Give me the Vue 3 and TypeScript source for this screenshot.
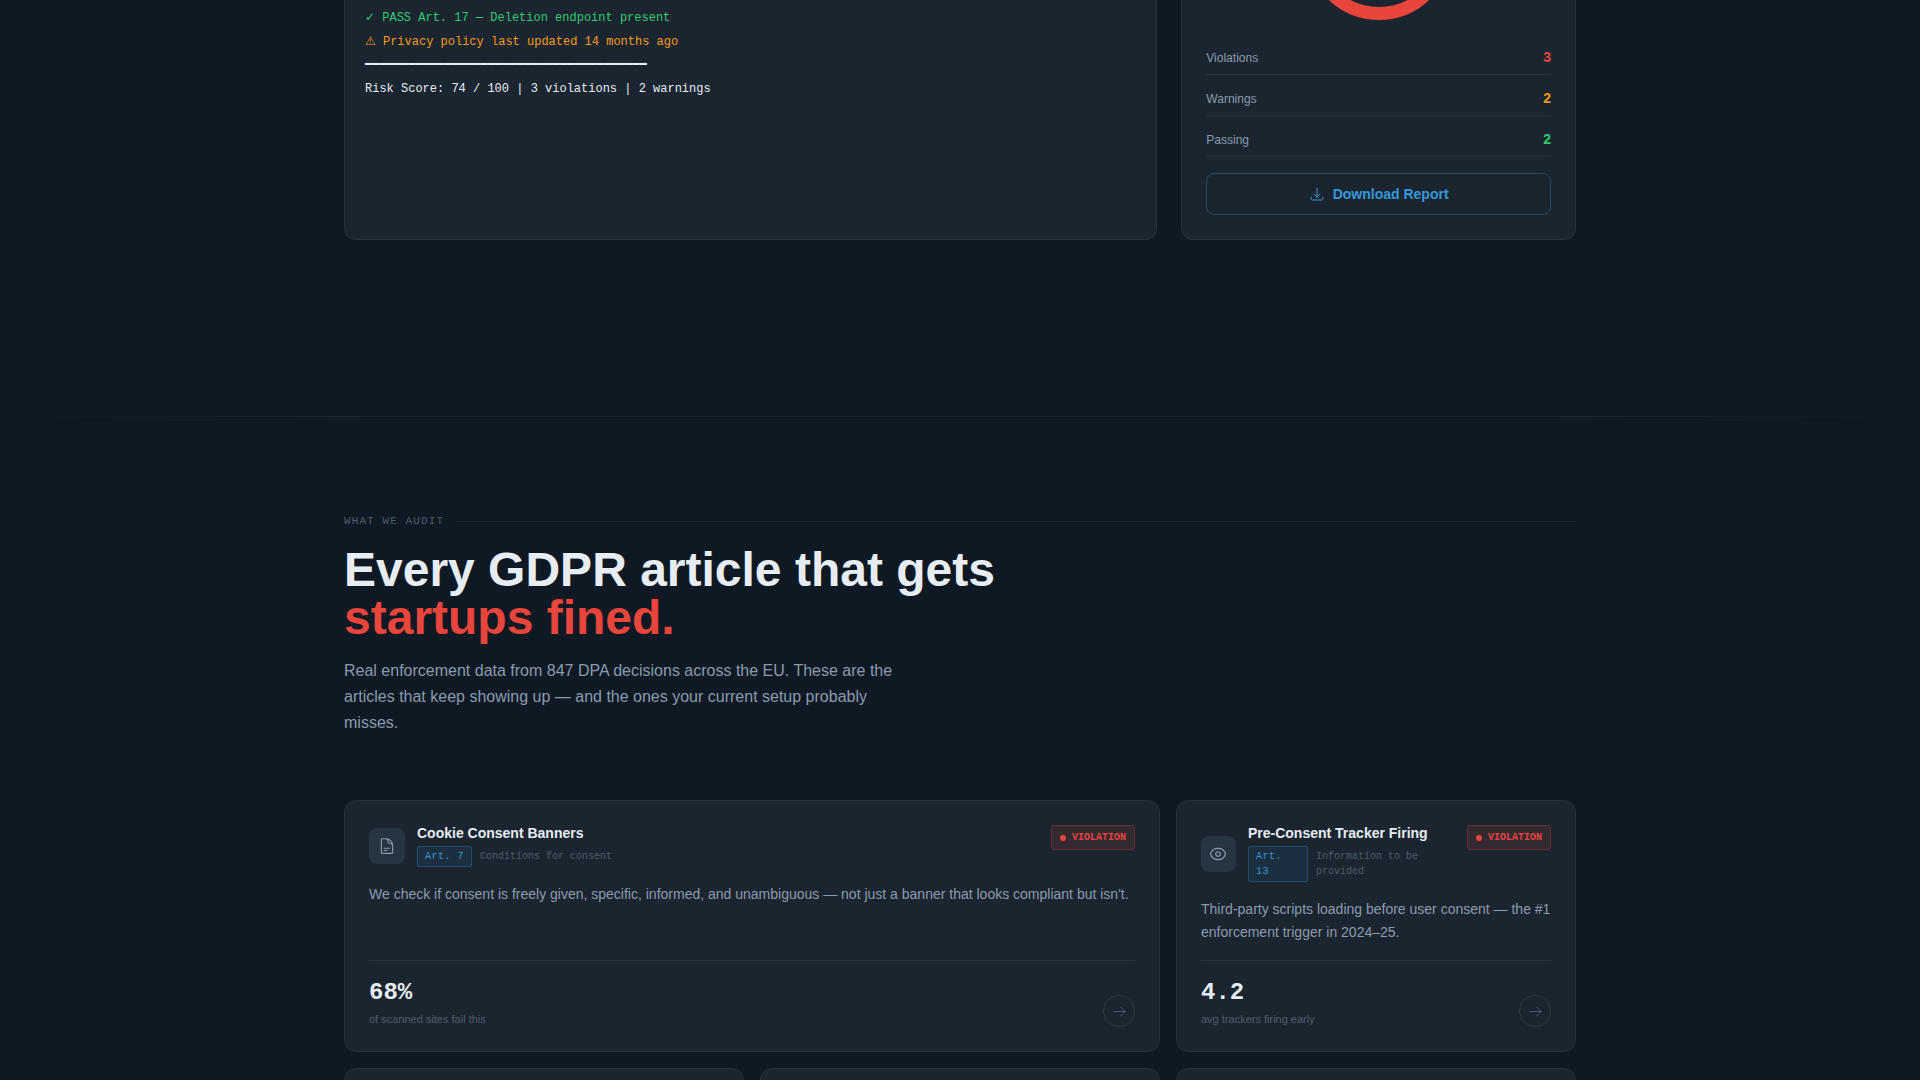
<script setup lang="ts">
interface LogLine {
  text: string
  tone: 'pass' | 'warn' | 'rule' | 'plain'
}

interface Tally {
  label: string
  count: number
  tone: 'bad' | 'warn' | 'pass'
}

interface Audit {
  title: string
  article: string
  topic: string
  text: string
  value: string
  caption: string
  icon: string[]
  wide: boolean
}

const log: LogLine[] = [
  { text: '✓ PASS Art. 17 — Deletion endpoint present', tone: 'pass' },
  { text: '⚠ Privacy policy last updated 14 months ago', tone: 'warn' },
  { text: '━'.repeat(39), tone: 'rule' },
  { text: 'Risk Score: 74 / 100 | 3 violations | 2 warnings', tone: 'plain' },
]

const tallies: Tally[] = [
  { label: 'Violations', count: 3, tone: 'bad' },
  { label: 'Warnings', count: 2, tone: 'warn' },
  { label: 'Passing', count: 2, tone: 'pass' },
]

const audits: Audit[] = [
  {
    title: 'Cookie Consent Banners',
    article: 'Art. 7',
    topic: 'Conditions for consent',
    text: "We check if consent is freely given, specific, informed, and unambiguous — not just a banner that looks compliant but isn't.",
    value: '68%',
    caption: 'of scanned sites fail this',
    icon: [
      'M19.5 14.25v-2.625a3.375 3.375 0 0 0-3.375-3.375h-1.5A1.125 1.125 0 0 1 13.5 7.125v-1.5a3.375 3.375 0 0 0-3.375-3.375H8.25m0 12.75h7.5m-7.5 3H12M10.5 2.25H5.625c-.621 0-1.125.504-1.125 1.125v17.25c0 .621.504 1.125 1.125 1.125h12.75c.621 0 1.125-.504 1.125-1.125V11.25a9 9 0 0 0-9-9Z',
    ],
    wide: true,
  },
  {
    title: 'Pre-Consent Tracker Firing',
    article: 'Art. 13',
    topic: 'Information to be provided',
    text: 'Third-party scripts loading before user consent — the #1 enforcement trigger in 2024–25.',
    value: '4.2',
    caption: 'avg trackers firing early',
    icon: [
      'M2.036 12.322a1.012 1.012 0 0 1 0-.639C3.423 7.51 7.36 4.5 12 4.5c4.638 0 8.573 3.007 9.963 7.178.07.207.07.431 0 .639C20.577 16.49 16.64 19.5 12 19.5c-4.638 0-8.573-3.007-9.963-7.178Z',
      'M15 12a3 3 0 1 1-6 0 3 3 0 0 1 6 0Z',
    ],
    wide: false,
  },
]
</script>

<template>
  <main class="page">
    <section class="container scan">
      <div class="panel terminal">
        <p v-for="line in log" :key="line.text" class="line" :class="line.tone">{{ line.text }}</p>
      </div>

      <aside class="panel score">
        <svg class="gauge" viewBox="0 133 160 27" aria-hidden="true">
          <circle cx="80" cy="80" r="66.5" />
        </svg>
        <dl class="tallies">
          <div v-for="t in tallies" :key="t.label" class="tally">
            <dt>{{ t.label }}</dt>
            <dd :class="t.tone">{{ t.count }}</dd>
          </div>
        </dl>
        <button class="download" type="button">
          <svg class="icon small" viewBox="0 0 24 24" aria-hidden="true">
            <path d="M3 16.5v2.25A2.25 2.25 0 0 0 5.25 21h13.5A2.25 2.25 0 0 0 21 18.75V16.5M16.5 12 12 16.5m0 0L7.5 12m4.5 4.5V3" />
          </svg>
          Download Report
        </button>
      </aside>
    </section>

    <div class="divider"></div>

    <section class="container audit">
      <div class="eyebrow">WHAT WE AUDIT</div>
      <h2 class="heading">Every GDPR article that gets<br /><span class="bad">startups fined.</span></h2>
      <p class="intro">
        Real enforcement data from 847 DPA decisions across the EU. These are the articles that keep
        showing up — and the ones your current setup probably misses.
      </p>

      <div class="grid">
        <article v-for="a in audits" :key="a.title" class="panel card" :class="{ wide: a.wide }">
          <header class="card-head">
            <div class="ident">
              <span class="tile">
                <svg class="icon" viewBox="0 0 24 24" aria-hidden="true">
                  <path v-for="d in a.icon" :key="d" :d="d" />
                </svg>
              </span>
              <div>
                <h3 class="title">{{ a.title }}</h3>
                <div class="meta">
                  <span class="article">{{ a.article }}</span>
                  <span>{{ a.topic }}</span>
                </div>
              </div>
            </div>
            <span class="badge"><i class="dot"></i>VIOLATION</span>
          </header>
          <p class="text">{{ a.text }}</p>
          <footer class="card-foot">
            <div>
              <div class="value">{{ a.value }}</div>
              <div class="caption">{{ a.caption }}</div>
            </div>
            <button class="go" type="button" :aria-label="a.title">
              <svg class="icon arrow" viewBox="0 0 24 24" aria-hidden="true">
                <path d="M13.5 4.5 21 12m0 0-7.5 7.5M21 12H3" />
              </svg>
            </button>
          </footer>
        </article>
        <article v-for="n in 3" :key="n" class="panel card"></article>
      </div>
    </section>
  </main>
</template>

<style>
body {
  margin: 0;
  background: #0f1923;
}
</style>

<style scoped>
* {
  box-sizing: border-box;
}

.page {
  height: 100vh;
  overflow: hidden;
  background: #0f1923;
  color: #e8edf4;
  font-family: "Liberation Sans", Arial, sans-serif;
}

.container {
  max-width: 1280px;
  margin: 0 auto;
  padding: 0 24px;
}

.panel {
  background: #1b2530;
  border: 1px solid #26323d;
  border-radius: 12px;
}

h2,
h3,
p,
dl,
dd {
  margin: 0;
}

.bad {
  color: #e8453c;
}

.warn {
  color: #f39c12;
}

.pass {
  color: #2ecc71;
}

.icon {
  width: 18px;
  height: 18px;
  flex: none;
  fill: none;
  stroke: currentColor;
  stroke-width: 1.5;
  stroke-linecap: round;
  stroke-linejoin: round;
}

.icon.small {
  width: 16px;
  height: 16px;
}

.icon.arrow {
  width: 15px;
  height: 15px;
}

/* Scan result */
.scan {
  display: grid;
  grid-template-columns: repeat(12, minmax(0, 1fr));
  gap: 24px;
  padding-bottom: 176px;
}

.scan .panel {
  border-top: 0;
  border-top-left-radius: 0;
  border-top-right-radius: 0;
}

.terminal {
  grid-column: span 8;
  padding: 6px 20px 20px;
  font: 12px/24px "Liberation Mono", "DejaVu Sans", monospace;
}

.line {
  height: 24px;
  white-space: nowrap;
}

.line.rule {
  height: 23px;
  line-height: 22px;
}

.score {
  grid-column: span 4;
  display: flex;
  flex-direction: column;
  padding: 0 24px 24px;
}

.gauge {
  align-self: center;
  width: 160px;
  height: 27px;
  fill: none;
  stroke: #e8453c;
  stroke-width: 13;
}

.tallies {
  display: flex;
  flex-direction: column;
  gap: 8px;
  margin: 15px 0 16px;
}

.tally {
  display: flex;
  justify-content: space-between;
  align-items: baseline;
  padding: 8px 0;
  border-bottom: 1px solid #26323d;
  font-size: 12px;
  line-height: 16px;
}

.tally dt {
  color: #8b9bae;
}

.tally dd {
  font-size: 14px;
  font-weight: 700;
  line-height: 14px;
}

.download {
  display: flex;
  justify-content: center;
  align-items: center;
  gap: 8px;
  height: 42px;
  padding: 0;
  border: 1px solid #254d69;
  border-radius: 8px;
  background: transparent;
  color: #3498db;
  font: 700 14px/20px "Liberation Sans", Arial, sans-serif;
}

.divider {
  height: 1px;
  background: linear-gradient(90deg, transparent, #1c2731 20%, #1c2731 80%, transparent);
}

/* Audit overview */
.audit {
  padding-top: 96px;
}

.eyebrow {
  display: flex;
  align-items: center;
  gap: 12px;
  margin-bottom: 16px;
  color: #4f5d6c;
  font: 11px/17px "Liberation Mono", monospace;
  letter-spacing: 1.1px;
}

.eyebrow::after {
  content: "";
  flex: 1;
  height: 1px;
  background: #19242e;
}

.heading {
  font-size: 48px;
  line-height: 48px;
}

.intro {
  max-width: 560px;
  margin: 16px 0 64px;
  color: #8b9bae;
  font-size: 16px;
  line-height: 26px;
}

.grid {
  display: grid;
  grid-template-columns: repeat(3, minmax(0, 1fr));
  gap: 16px;
}

.card {
  display: flex;
  flex-direction: column;
  min-height: 252px;
  padding: 24px;
}

.card.wide {
  grid-column: span 2;
}

.card-head {
  display: flex;
  justify-content: space-between;
  align-items: flex-start;
}

.ident {
  display: flex;
  align-items: center;
  gap: 12px;
}

.tile {
  display: flex;
  justify-content: center;
  align-items: center;
  width: 36px;
  height: 36px;
  border-radius: 8px;
  background: #273543;
  color: #8b9bae;
}

.title {
  margin-bottom: 4px;
  font-size: 14px;
  line-height: 17px;
}

.meta {
  display: flex;
  align-items: center;
  gap: 8px;
  color: #4f5d6c;
  font: 10px/15px "Liberation Mono", monospace;
}

.article {
  padding: 2px 7px;
  border: 1px solid #24506c;
  border-radius: 2px;
  background: #1c2f41;
  color: #3498db;
  letter-spacing: 0.5px;
}

.badge {
  display: flex;
  flex: none;
  align-items: center;
  gap: 6px;
  padding: 4px 8px;
  border: 1px solid #6b2d34;
  border-radius: 3px;
  background: #352932;
  color: #e8453c;
  font: 700 10px/15px "Liberation Mono", monospace;
}

.dot {
  width: 6px;
  height: 6px;
  border-radius: 50%;
  background: currentColor;
}

.text {
  margin: 16px 0;
  color: #8b9bae;
  font-size: 14px;
  line-height: 23px;
}

.card-foot {
  display: flex;
  justify-content: space-between;
  align-items: flex-end;
  margin-top: auto;
  padding-top: 16px;
  border-top: 1px solid #26323d;
}

.value {
  margin-bottom: 4px;
  font: 700 24px/31px "Liberation Mono", monospace;
}

.caption {
  color: #4f5d6c;
  font-size: 11px;
  line-height: 15px;
}

.go {
  display: flex;
  justify-content: center;
  align-items: center;
  width: 32px;
  height: 32px;
  padding: 0;
  border: 1px solid #2c3844;
  border-radius: 50%;
  background: transparent;
  color: #4f5d6c;
}
</style>
